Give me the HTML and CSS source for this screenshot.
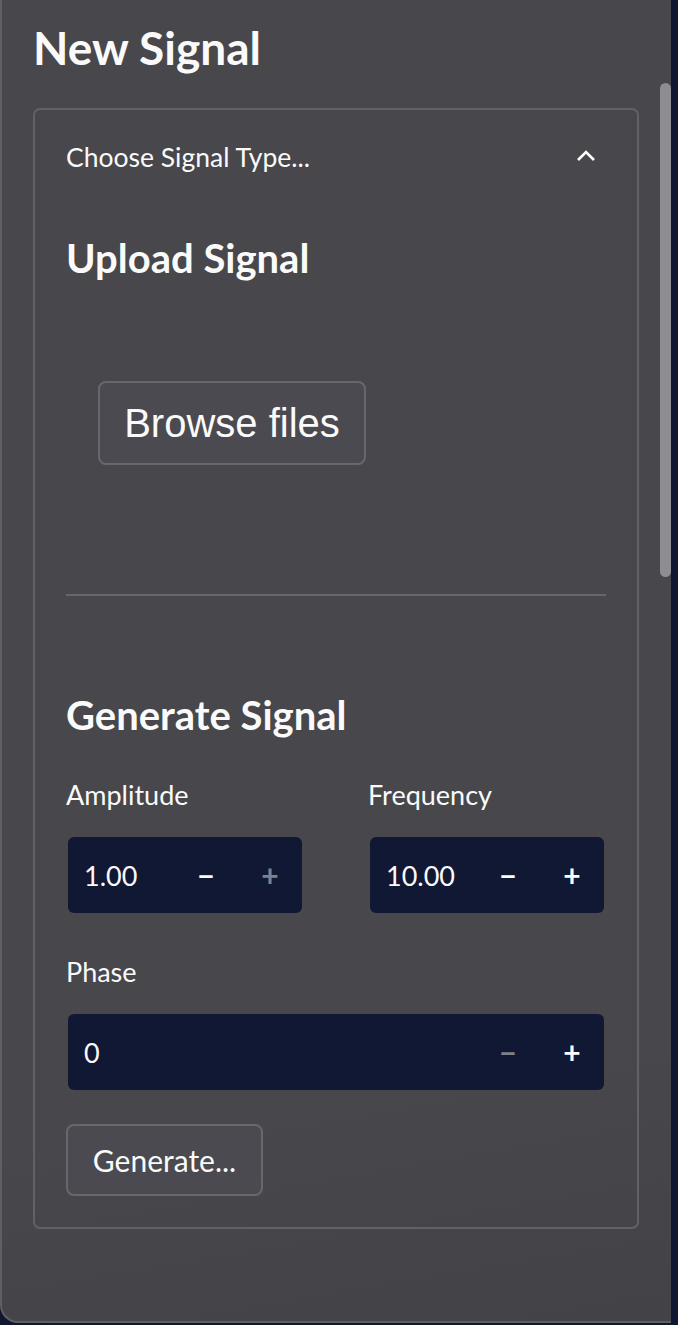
FILE: index.html
```html
<!DOCTYPE html>
<html lang="en">
<head>
    <meta charset="UTF-8">
    <meta name="viewport" content="width=device-width, initial-scale=1.0">
    <title>New Signal</title>
    <link rel="stylesheet" href="styles.css">
</head>
<body>

<div class="panel">
    <div class="scroll-thumb"></div>

    <h1 class="title">New Signal</h1>

    <div class="expander">
        <!-- Заголовок раскрывающегося блока -->
        <div class="expander-header">
            <span>Choose Signal Type...</span>
            <svg class="chevron" width="20" height="12" viewBox="0 0 20 12">
                <path d="M2 10 L10 2 L18 10" fill="none" stroke="#fff" stroke-width="2.6"/>
            </svg>
        </div>

        <div class="expander-body">
            <h2 class="section-title">Upload Signal</h2>
            <div class="upload-area">
                <button class="browse-btn">Browse files</button>
            </div>

            <hr class="divider">

            <h2 class="section-title">Generate Signal</h2>

            <div class="field-row">
                <div class="field">
                    <label>Amplitude</label>
                    <div class="number-input">
                        <span class="value">1.00</span>
                        <span class="step">&minus;</span>
                        <span class="step disabled">+</span>
                    </div>
                </div>
                <div class="field">
                    <label>Frequency</label>
                    <div class="number-input">
                        <span class="value">10.00</span>
                        <span class="step">&minus;</span>
                        <span class="step">+</span>
                    </div>
                </div>
            </div>

            <div class="field">
                <label>Phase</label>
                <div class="number-input">
                    <span class="value">0</span>
                    <span class="step disabled">&minus;</span>
                    <span class="step">+</span>
                </div>
            </div>

            <button class="generate-btn">Generate...</button>
        </div>
    </div>
</div>

</body>
</html>
```

FILE: styles.css
```css
/* Общие стили */
body {
    margin: 0;
    padding: 0;
    background-color: #0f1731;
    font-family: "Lato", "Noto Sans", sans-serif;
    color: #fafafa;
}

.panel {
    position: relative;
    width: 671px;
    height: 1323px;
    padding-left: 31px;
    box-sizing: border-box;
    background: linear-gradient(170deg, #48474c 80%, #434247 100%);
    border-left: 2px solid #5f5e63;
    border-bottom: 2px solid #5f5e63;
    border-bottom-left-radius: 18px;
}

.scroll-thumb {
    position: absolute;
    right: 0;
    top: 83px;
    width: 11px;
    height: 494px;
    background-color: #8e8e92;
    border-radius: 6px;
}

.title {
    margin: 0;
    padding-top: 22px;
    font-size: 46px;
    font-weight: 700;
    line-height: 52px;
    height: 86px;
}

.expander {
    width: 606px;
    border: 2px solid #626167;
    border-radius: 7px;
    box-sizing: border-box;
}

.expander-header {
    display: flex;
    justify-content: space-between;
    align-items: center;
    height: 94px;
    padding: 0 41px 0 31px;
    font-size: 26.5px;
}

.chevron {
    margin-top: -2px;
}

.expander-body {
    padding: 32px 31px 31px 31px;
}

.section-title {
    margin: 0;
    font-size: 40px;
    font-weight: 700;
    line-height: 44px;
}

.upload-area {
    padding: 101px 0 129px 32px;
}

.browse-btn {
    font-family: "Liberation Sans", Arial, sans-serif;
    font-size: 40px;
    color: #fafafa;
    background-color: #4b4a50;
    border: 2px solid #68676d;
    border-radius: 8px;
    width: 268px;
    height: 84px;
    padding: 0;
}

.divider {
    margin: 0 0 97px 0;
    border: none;
    border-top: 2px solid #68676d;
}

.field-row {
    display: grid;
    grid-template-columns: 1fr 1fr;
    grid-gap: 64px;
    margin-top: 41px;
    margin-bottom: 42px;
}

.field {
    margin-bottom: 22px;
}

.field-row .field {
    margin-bottom: 0;
}

.field label {
    display: block;
    font-size: 27px;
    line-height: 34px;
    margin-bottom: 25px;
}

.number-input {
    display: flex;
    align-items: center;
    height: 76px;
    margin: 0 2px;
    background-color: #111833;
    border-radius: 6px;
    padding-left: 16px;
    font-size: 27px;
}

.number-input .value {
    flex: 1;
}

.number-input .step {
    width: 64px;
    text-align: center;
    font-size: 30px;
    font-weight: 700;
}

.number-input .step.disabled {
    color: #7e808c;
}

.generate-btn {
    margin-top: 12px;
    font-family: "Lato", "Noto Sans", sans-serif;
    font-size: 30px;
    color: #fafafa;
    background-color: #4b4a50;
    border: 2px solid #68676d;
    border-radius: 8px;
    width: 197px;
    height: 72px;
    padding: 0;
}
```
